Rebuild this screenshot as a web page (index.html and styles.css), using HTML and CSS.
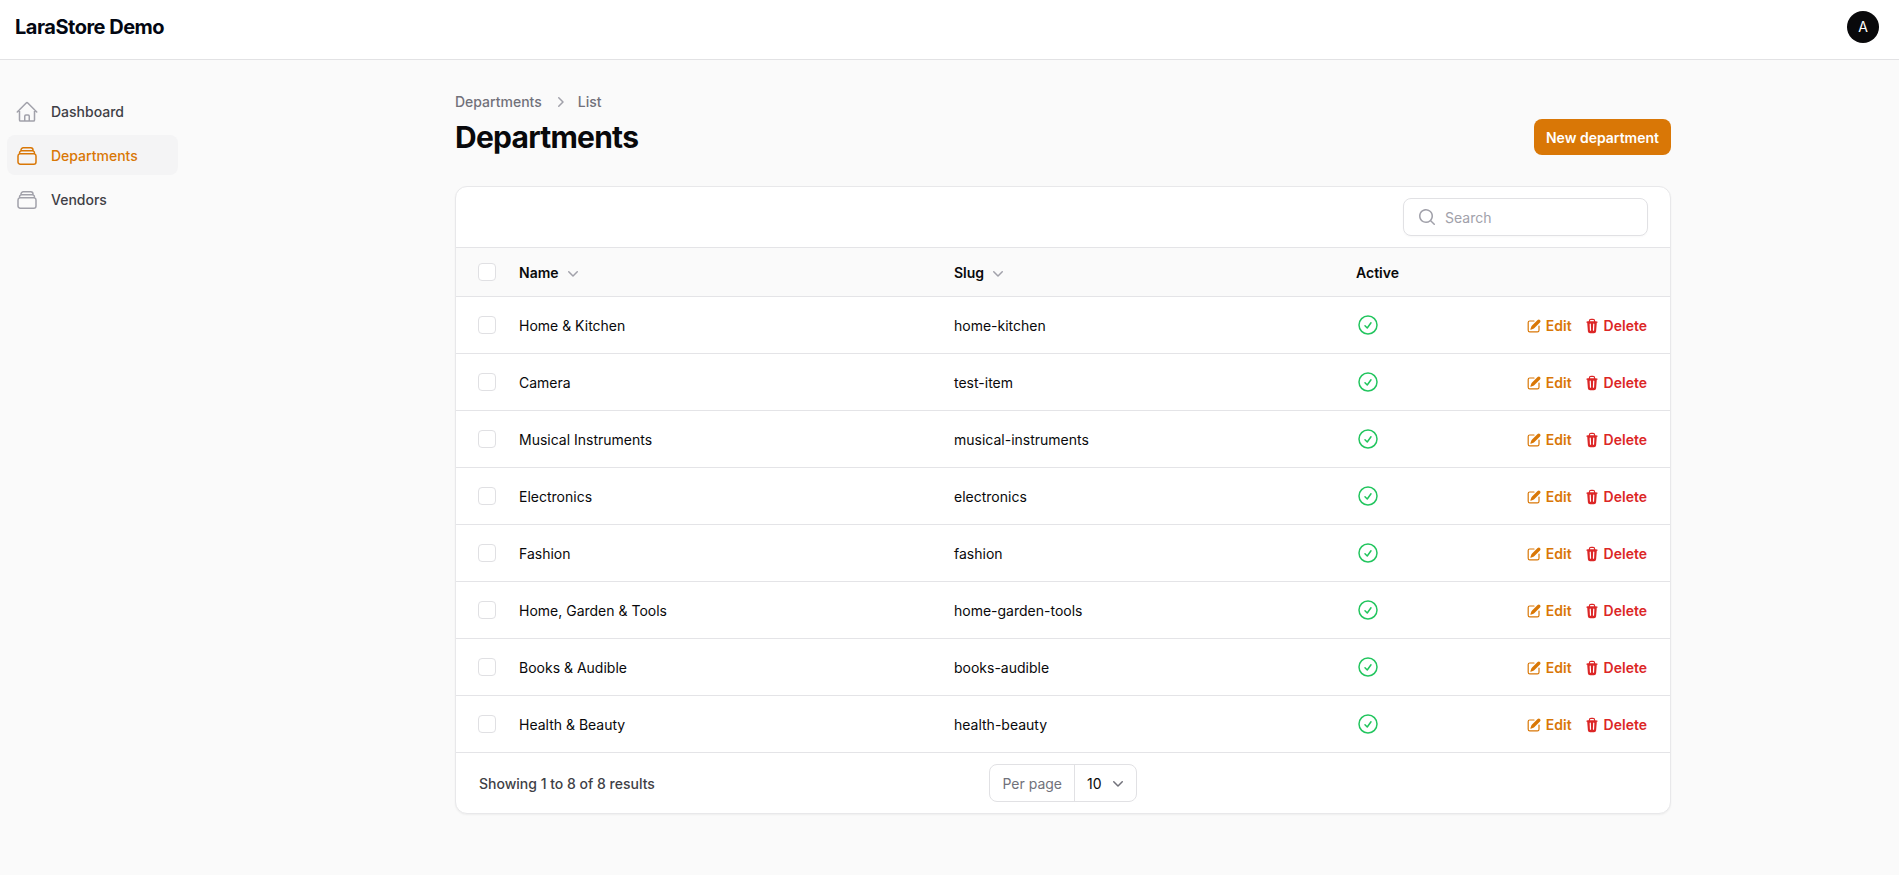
FILE: index.html
```html
<!DOCTYPE html>
<html lang="en">
<head>
    <meta charset="UTF-8">
    <title>Departments - LaraStore Demo</title>
    <link rel="stylesheet" href="styles.css">
</head>
<body>
    <svg class="defs" aria-hidden="true">
        <defs>
            <symbol id="i-home" viewBox="0 0 24 24"><path fill="none" stroke="currentColor" stroke-width="1.5" stroke-linecap="round" stroke-linejoin="round" d="m2.25 12 8.954-8.955c.44-.439 1.152-.439 1.591 0L21.75 12M4.5 9.75v10.125c0 .621.504 1.125 1.125 1.125H9.75v-4.875c0-.621.504-1.125 1.125-1.125h2.25c.621 0 1.125.504 1.125 1.125V21h4.125c.621 0 1.125-.504 1.125-1.125V9.75M8.25 21h8.25"/></symbol>
            <symbol id="i-stack" viewBox="0 0 24 24"><path fill="none" stroke="currentColor" stroke-width="1.5" stroke-linecap="round" stroke-linejoin="round" d="M6 6.878V6a2.25 2.25 0 0 1 2.25-2.25h7.5A2.25 2.25 0 0 1 18 6v.878m-12 0c.235-.083.487-.128.75-.128h10.5c.263 0 .515.045.75.128m-12 0A2.25 2.25 0 0 0 4.5 9v.878m13.5-3A2.25 2.25 0 0 1 19.5 9v.878m0 0a2.246 2.246 0 0 0-.75-.128H5.25c-.263 0-.515.045-.75.128m15 0A2.25 2.25 0 0 1 21 12v6a2.25 2.25 0 0 1-2.25 2.25H5.25A2.25 2.25 0 0 1 3 18v-6c0-.98.626-1.813 1.5-2.122"/></symbol>
            <symbol id="i-search" viewBox="0 0 20 20"><path fill="currentColor" fill-rule="evenodd" clip-rule="evenodd" d="M9 3.5a5.5 5.5 0 1 0 0 11 5.5 5.5 0 0 0 0-11ZM2 9a7 7 0 1 1 12.452 4.391l3.328 3.329a.75.75 0 1 1-1.06 1.06l-3.329-3.328A7 7 0 0 1 2 9Z"/></symbol>
            <symbol id="i-right" viewBox="0 0 20 20"><path fill="currentColor" fill-rule="evenodd" clip-rule="evenodd" d="M8.22 5.22a.75.75 0 0 1 1.06 0l4.25 4.25a.75.75 0 0 1 0 1.06l-4.25 4.25a.75.75 0 0 1-1.06-1.06L11.94 10 8.22 6.28a.75.75 0 0 1 0-1.06Z"/></symbol>
            <symbol id="i-down" viewBox="0 0 20 20"><path fill="currentColor" fill-rule="evenodd" clip-rule="evenodd" d="M5.22 8.22a.75.75 0 0 1 1.06 0L10 11.94l3.72-3.72a.75.75 0 1 1 1.06 1.06l-4.25 4.25a.75.75 0 0 1-1.06 0L5.22 9.28a.75.75 0 0 1 0-1.06Z"/></symbol>
            <symbol id="i-check" viewBox="0 0 24 24"><path fill="none" stroke="currentColor" stroke-width="1.5" stroke-linecap="round" stroke-linejoin="round" d="M9 12.75 11.25 15 15 9.75M21 12a9 9 0 1 1-18 0 9 9 0 0 1 18 0Z"/></symbol>
            <symbol id="i-edit" viewBox="0 0 20 20"><path fill="currentColor" d="m5.433 13.917 1.262-3.155A4 4 0 0 1 7.58 9.42l6.92-6.918a2.121 2.121 0 0 1 3 3l-6.92 6.918c-.383.383-.84.685-1.343.886l-3.154 1.262a.5.5 0 0 1-.65-.65Z"/><path fill="currentColor" d="M3.5 5.75c0-.69.56-1.25 1.25-1.25H10A.75.75 0 0 0 10 3H4.75A2.75 2.75 0 0 0 2 5.75v9.5A2.75 2.75 0 0 0 4.75 18h9.5A2.75 2.75 0 0 0 17 15.25V10a.75.75 0 0 0-1.5 0v5.25c0 .69-.56 1.25-1.25 1.25h-9.5c-.69 0-1.25-.56-1.25-1.25v-9.5Z"/></symbol>
            <symbol id="i-trash" viewBox="0 0 20 20"><path fill="currentColor" fill-rule="evenodd" clip-rule="evenodd" d="M8.75 1A2.75 2.75 0 0 0 6 3.75v.443c-.795.077-1.584.176-2.365.298a.75.75 0 1 0 .23 1.482l.149-.022.841 10.518A2.75 2.75 0 0 0 7.596 19h4.807a2.75 2.75 0 0 0 2.742-2.53l.841-10.52.149.023a.75.75 0 0 0 .23-1.482A41.03 41.03 0 0 0 14 4.193V3.75A2.75 2.75 0 0 0 11.25 1h-2.5ZM10 4c.84 0 1.673.025 2.5.075V3.75c0-.69-.56-1.25-1.25-1.25h-2.5c-.69 0-1.25.56-1.25 1.25v.325C8.327 4.025 9.16 4 10 4ZM8.58 7.72a.75.75 0 0 0-1.5.06l.3 7.5a.75.75 0 1 0 1.5-.06l-.3-7.5Zm4.34.06a.75.75 0 1 0-1.5-.06l-.3 7.5a.75.75 0 1 0 1.5.06l.3-7.5Z"/></symbol>
        </defs>
    </svg>

    <!-- Top bar -->
    <header class="topbar">
        <div class="brand">LaraStore Demo</div>
        <div class="avatar">A</div>
    </header>

    <div class="layout">
        <!-- Sidebar -->
        <nav class="sidebar">
            <a class="nav-item"><svg class="nav-icon"><use href="#i-home"/></svg>Dashboard</a>
            <a class="nav-item nav-item-active"><svg class="nav-icon"><use href="#i-stack"/></svg>Departments</a>
            <a class="nav-item"><svg class="nav-icon"><use href="#i-stack"/></svg>Vendors</a>
        </nav>

        <main class="main">
            <div class="page-header">
                <div>
                    <div class="breadcrumbs">
                        <span>Departments</span>
                        <svg class="crumb-sep"><use href="#i-right"/></svg>
                        <span>List</span>
                    </div>
                    <h1>Departments</h1>
                </div>
                <button class="btn-primary">New department</button>
            </div>

            <!-- Table card -->
            <section class="card">
                <div class="toolbar">
                    <div class="search">
                        <svg class="search-icon"><use href="#i-search"/></svg>
                        <span class="search-text">Search</span>
                    </div>
                </div>

                <table class="table">
                    <colgroup>
                        <col class="col-check">
                        <col class="col-name">
                        <col class="col-slug">
                        <col class="col-active">
                        <col>
                    </colgroup>
                    <thead>
                        <tr>
                            <th><span class="checkbox"></span></th>
                            <th class="cell-text"><span class="th-sort">Name <svg class="sort-icon"><use href="#i-down"/></svg></span></th>
                            <th class="cell-text"><span class="th-sort">Slug <svg class="sort-icon"><use href="#i-down"/></svg></span></th>
                            <th class="cell-text">Active</th>
                            <th></th>
                        </tr>
                    </thead>
                    <tbody>
                        <tr>
                            <td><span class="checkbox"></span></td>
                            <td class="cell-text">Home &amp; Kitchen</td>
                            <td class="cell-text">home-kitchen</td>
                            <td><svg class="check-icon"><use href="#i-check"/></svg></td>
                            <td class="cell-text"><div class="actions"><a class="action-edit"><svg class="action-icon"><use href="#i-edit"/></svg>Edit</a><a class="action-delete"><svg class="action-icon"><use href="#i-trash"/></svg>Delete</a></div></td>
                        </tr>
                        <tr>
                            <td><span class="checkbox"></span></td>
                            <td class="cell-text">Camera</td>
                            <td class="cell-text">test-item</td>
                            <td><svg class="check-icon"><use href="#i-check"/></svg></td>
                            <td class="cell-text"><div class="actions"><a class="action-edit"><svg class="action-icon"><use href="#i-edit"/></svg>Edit</a><a class="action-delete"><svg class="action-icon"><use href="#i-trash"/></svg>Delete</a></div></td>
                        </tr>
                        <tr>
                            <td><span class="checkbox"></span></td>
                            <td class="cell-text">Musical Instruments</td>
                            <td class="cell-text">musical-instruments</td>
                            <td><svg class="check-icon"><use href="#i-check"/></svg></td>
                            <td class="cell-text"><div class="actions"><a class="action-edit"><svg class="action-icon"><use href="#i-edit"/></svg>Edit</a><a class="action-delete"><svg class="action-icon"><use href="#i-trash"/></svg>Delete</a></div></td>
                        </tr>
                        <tr>
                            <td><span class="checkbox"></span></td>
                            <td class="cell-text">Electronics</td>
                            <td class="cell-text">electronics</td>
                            <td><svg class="check-icon"><use href="#i-check"/></svg></td>
                            <td class="cell-text"><div class="actions"><a class="action-edit"><svg class="action-icon"><use href="#i-edit"/></svg>Edit</a><a class="action-delete"><svg class="action-icon"><use href="#i-trash"/></svg>Delete</a></div></td>
                        </tr>
                        <tr>
                            <td><span class="checkbox"></span></td>
                            <td class="cell-text">Fashion</td>
                            <td class="cell-text">fashion</td>
                            <td><svg class="check-icon"><use href="#i-check"/></svg></td>
                            <td class="cell-text"><div class="actions"><a class="action-edit"><svg class="action-icon"><use href="#i-edit"/></svg>Edit</a><a class="action-delete"><svg class="action-icon"><use href="#i-trash"/></svg>Delete</a></div></td>
                        </tr>
                        <tr>
                            <td><span class="checkbox"></span></td>
                            <td class="cell-text">Home, Garden &amp; Tools</td>
                            <td class="cell-text">home-garden-tools</td>
                            <td><svg class="check-icon"><use href="#i-check"/></svg></td>
                            <td class="cell-text"><div class="actions"><a class="action-edit"><svg class="action-icon"><use href="#i-edit"/></svg>Edit</a><a class="action-delete"><svg class="action-icon"><use href="#i-trash"/></svg>Delete</a></div></td>
                        </tr>
                        <tr>
                            <td><span class="checkbox"></span></td>
                            <td class="cell-text">Books &amp; Audible</td>
                            <td class="cell-text">books-audible</td>
                            <td><svg class="check-icon"><use href="#i-check"/></svg></td>
                            <td class="cell-text"><div class="actions"><a class="action-edit"><svg class="action-icon"><use href="#i-edit"/></svg>Edit</a><a class="action-delete"><svg class="action-icon"><use href="#i-trash"/></svg>Delete</a></div></td>
                        </tr>
                        <tr>
                            <td><span class="checkbox"></span></td>
                            <td class="cell-text">Health &amp; Beauty</td>
                            <td class="cell-text">health-beauty</td>
                            <td><svg class="check-icon"><use href="#i-check"/></svg></td>
                            <td class="cell-text"><div class="actions"><a class="action-edit"><svg class="action-icon"><use href="#i-edit"/></svg>Edit</a><a class="action-delete"><svg class="action-icon"><use href="#i-trash"/></svg>Delete</a></div></td>
                        </tr>
                    </tbody>
                </table>

                <div class="pagination">
                    <div class="results">Showing 1 to 8 of 8 results</div>
                    <div class="per-page">
                        <span class="per-page-label">Per page</span>
                        <span class="per-page-value">10 <svg class="per-page-icon"><use href="#i-down"/></svg></span>
                    </div>
                    <div class="pagination-end"></div>
                </div>
            </section>
        </main>
    </div>
</body>
</html>
```

FILE: styles.css
```css
/* General Styles */
* {
    box-sizing: border-box;
}

body {
    margin: 0;
    min-height: 875px;
    background-color: #fafafa;
    color: #09090b;
    font-family: Inter, "Liberation Sans", sans-serif;
    font-size: 14px;
    line-height: 20px;
}

.defs {
    display: none;
}

/* Top bar */
.topbar {
    display: flex;
    align-items: center;
    justify-content: space-between;
    height: 60px;
    padding: 0 20px 6px 15px;
    background-color: #fff;
    border-bottom: 1px solid #e2e2e4;
}

.brand {
    font-size: 20px;
    line-height: 28px;
    font-weight: 700;
    letter-spacing: -0.5px;
    color: #030712;
}

.avatar {
    display: flex;
    align-items: center;
    justify-content: center;
    width: 32px;
    height: 32px;
    border-radius: 50%;
    background-color: #09090b;
    color: #fff;
    font-size: 14px;
}

/* Layout */
.layout {
    display: flex;
    align-items: flex-start;
}

.sidebar {
    display: flex;
    flex-direction: column;
    gap: 4px;
    flex: 0 0 171px;
    margin-left: 7px;
    padding-top: 31px;
}

.nav-item {
    display: flex;
    align-items: center;
    gap: 12px;
    height: 40px;
    padding: 2px 8px 0;
    border-radius: 8px;
    font-weight: 500;
    color: #3f3f46;
}

.nav-item-active {
    background-color: #f4f4f5;
    color: #d97706;
}

.nav-icon {
    width: 24px;
    height: 24px;
    color: #a1a1aa;
}

.nav-item-active .nav-icon {
    color: #d97706;
}

.main {
    width: 1216px;
    margin-left: 277px;
    padding-top: 32px;
}

/* Page header */
.page-header {
    display: flex;
    align-items: flex-end;
    justify-content: space-between;
    margin-bottom: 31px;
}

.breadcrumbs {
    display: flex;
    align-items: center;
    gap: 8px;
    font-weight: 500;
    color: #71717a;
}

.crumb-sep {
    width: 20px;
    height: 20px;
    color: #a1a1aa;
}

h1 {
    margin: 7px 0 0;
    font-size: 30px;
    line-height: 36px;
    font-weight: 700;
    letter-spacing: -0.75px;
    color: #09090b;
}

.btn-primary {
    height: 36px;
    padding: 0 12px;
    border: none;
    border-radius: 8px;
    background-color: #d97706;
    color: #fff;
    font-family: inherit;
    font-size: 14px;
    font-weight: 600;
}

/* Table card */
.card {
    overflow: hidden;
    background-color: #fff;
    border: 1px solid #e8e8ea;
    border-radius: 12px;
    box-shadow: 0 1px 2px rgba(0, 0, 0, 0.05);
}

.toolbar {
    display: flex;
    justify-content: flex-end;
    height: 60px;
    padding: 11px 22px 0 0;
}

.search {
    display: flex;
    align-items: center;
    gap: 8px;
    width: 245px;
    height: 38px;
    padding: 1px 13px 0;
    background-color: #fff;
    border: 1px solid #e1e1e4;
    border-radius: 8px;
    box-shadow: 0 1px 2px rgba(0, 0, 0, 0.03);
}

.search-icon {
    width: 20px;
    height: 20px;
    margin-top: -1px;
    color: #a1a1aa;
}

.search-text {
    color: #a1a1aa;
}

.table {
    width: 100%;
    border-collapse: collapse;
    table-layout: fixed;
}

.col-check {
    width: 63px;
}

.col-name {
    width: 435px;
}

.col-slug {
    width: 402px;
}

.col-active {
    width: 120px;
}

.table th {
    height: 49px;
    padding: 0 23px 0 0;
    background-color: #fafafa;
    border-top: 1px solid #e4e4e7;
    border-bottom: 1px solid #e4e4e7;
    font-weight: 600;
    text-align: left;
    color: #09090b;
}

.table td {
    height: 57px;
    padding: 0 23px 0 0;
    border-bottom: 1px solid #e4e4e7;
    color: #09090b;
}

.table th:first-child,
.table td:first-child {
    padding-left: 22px;
    padding-right: 0;
}

.table .cell-text {
    padding-top: 2px;
}

.checkbox {
    display: block;
    width: 18px;
    height: 18px;
    background-color: #fff;
    border: 1px solid #e0e0e3;
    border-radius: 4px;
}

.th-sort {
    display: inline-flex;
    align-items: center;
    gap: 4px;
}

.sort-icon {
    width: 20px;
    height: 20px;
    color: #a1a1aa;
}

.check-icon {
    display: block;
    width: 24px;
    height: 24px;
    margin-top: -1px;
    color: #22c55e;
}

/* Row actions */
.actions {
    display: flex;
    justify-content: flex-end;
    gap: 12px;
    font-weight: 600;
}

.actions a {
    display: inline-flex;
    align-items: center;
    gap: 4px;
}

.action-icon {
    width: 16px;
    height: 16px;
}

.action-edit {
    color: #d97706;
}

.action-delete {
    color: #dc2626;
}

/* Footer */
.pagination {
    display: grid;
    grid-template-columns: 1fr auto 1fr;
    align-items: center;
    height: 60px;
    padding: 0 23px;
}

.results {
    padding-top: 2px;
    font-weight: 500;
    color: #3f3f46;
}

.per-page {
    display: flex;
    align-items: center;
    height: 38px;
    background-color: #fff;
    border: 1px solid #e1e1e4;
    border-radius: 8px;
}

.per-page-label {
    padding: 1px 12px 0;
    line-height: 36px;
    color: #71717a;
    border-right: 1px solid #e1e1e4;
}

.per-page-value {
    display: flex;
    align-items: center;
    gap: 6px;
    padding: 1px 8px 0 12px;
}

.per-page-icon {
    width: 20px;
    height: 20px;
    margin-top: -2px;
    color: #71717a;
}
```
